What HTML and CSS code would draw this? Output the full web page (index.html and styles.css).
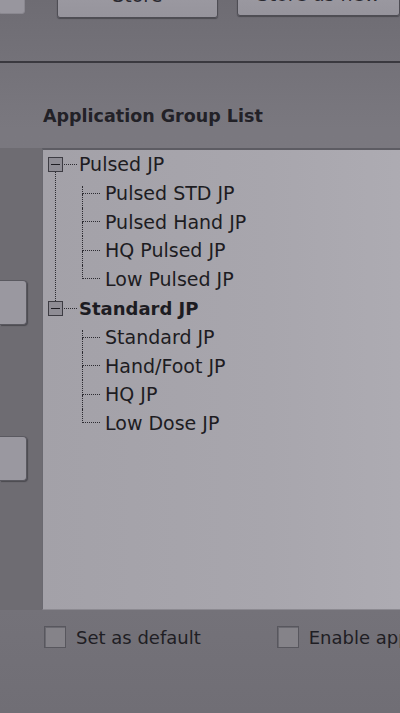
FILE: index.html
```html
<!DOCTYPE html>
<html lang="en">
<head>
    <meta charset="UTF-8">
    <meta name="viewport" content="width=device-width, initial-scale=1.0">
    <title>Application Group List</title>
    <link rel="stylesheet" href="styles.css">
</head>
<body>
    <div class="screen">
        <!-- buttons of the panel above, mostly scrolled away -->
        <div class="toolbar">
            <button class="btn btn-stub"></button>
            <button class="btn btn-store">Store</button>
            <button class="btn btn-store-new">Store as new</button>
        </div>

        <h2 class="section-title">Application Group List</h2>

        <div class="content">
            <div class="side">
                <button class="side-btn side-btn-first"></button>
                <button class="side-btn side-btn-second"></button>
            </div>

            <div class="tree-box">
                <ul class="tree">
                    <li class="group">
                        <div class="group-row">
                            <span class="expander"></span>
                            <span class="connector"></span>
                            <span class="group-name">Pulsed JP</span>
                        </div>
                        <ul class="children">
                            <li class="child"><span class="elbow"><i></i><i></i></span>Pulsed STD JP</li>
                            <li class="child"><span class="elbow"><i></i><i></i></span>Pulsed Hand JP</li>
                            <li class="child"><span class="elbow"><i></i><i></i></span>HQ Pulsed JP</li>
                            <li class="child"><span class="elbow"><i></i><i></i></span>Low Pulsed JP</li>
                        </ul>
                    </li>
                    <li class="group group-last">
                        <div class="group-row">
                            <span class="expander"></span>
                            <span class="connector"></span>
                            <span class="group-name selected">Standard JP</span>
                        </div>
                        <ul class="children">
                            <li class="child"><span class="elbow"><i></i><i></i></span>Standard JP</li>
                            <li class="child"><span class="elbow"><i></i><i></i></span>Hand/Foot JP</li>
                            <li class="child"><span class="elbow"><i></i><i></i></span>HQ JP</li>
                            <li class="child"><span class="elbow"><i></i><i></i></span>Low Dose JP</li>
                        </ul>
                    </li>
                </ul>
            </div>
        </div>

        <div class="options">
            <label class="check"><span class="box"></span>Set as default</label>
            <label class="check check-second"><span class="box"></span>Enable application group</label>
        </div>
    </div>
</body>
</html>
```

FILE: styles.css
```css
body {
    margin: 0;
    padding: 0;
    background-color: #76747b;
    font-family: "DejaVu Sans", Verdana, sans-serif;
    color: #1d1c22;
    overflow: hidden;
}

.screen {
    width: 400px;
    height: 713px;
    overflow: hidden;
    background: linear-gradient(180deg, #6e6c73 0%, #7a787f 18%, #7b7980 60%, #706e75 100%);
}

/* top toolbar, cut by the window edge */
.toolbar {
    height: 61px;
    display: flex;
    align-items: flex-start;
    border-bottom: 2px solid #3a393f;
    overflow: hidden;
}

.btn {
    height: 44px;
    margin-top: -26px;
    background: linear-gradient(180deg, #a09ea6, #96949c);
    border: 1px solid #4e4d54;
    border-radius: 3px;
    font-family: "DejaVu Sans", Verdana, sans-serif;
    font-size: 19px;
    color: #2a2930;
    padding: 0 0 2px 0;
    box-shadow: 0 1px 1px rgba(40, 40, 45, 0.5);
}

.btn-stub {
    width: 28px;
    margin-left: -2px;
    height: 40px;
    border-color: #8a8890;
    background: #98969e;
    box-shadow: none;
}

.btn-store {
    width: 167px;
    margin-left: 32px;
}

.btn-store-new {
    width: 170px;
    margin-left: 19px;
    height: 42px;
    white-space: nowrap;
}

.section-title {
    margin: 43px 0 22px 43px;
    font-size: 17.5px;
    line-height: 20px;
    font-weight: bold;
    color: #222127;
}

.content {
    display: flex;
    height: 462px;
}

.side {
    width: 42px;
    flex-shrink: 0;
    display: flex;
    flex-direction: column;
    background-color: #6e6c72;
}

.side-btn {
    width: 27px;
    height: 45px;
    padding: 0;
    background: #9a98a0;
    border: 1px solid #5a5960;
    border-left: none;
    border-radius: 0 4px 4px 0;
    box-shadow: 1px 1px 1px rgba(40, 40, 45, 0.5);
}

.side-btn-first {
    margin-top: 132px;
}

.side-btn-second {
    margin-top: 111px;
}

.tree-box {
    flex: 1;
    margin-right: -20px;
    background: linear-gradient(90deg, #a3a1a8 0%, #a8a6ad 60%, #aeacb3 100%);
    border-top: 2px solid #5d5c63;
    border-left: 1px solid #6a6970;
    border-bottom: 1px solid #8c8a91;
}

ul {
    list-style-type: none;
    margin: 0;
    padding: 0;
}

.tree {
    padding: 7px 0 0 12px;
    font-size: 19px;
}

/* vertical line from one group to the next */
.group {
    border-left: 1px dotted #2c2b31;
    padding-bottom: 8px;
}

.group-last {
    border-left-color: transparent;
}

.group-row {
    height: 15px;
    display: flex;
    align-items: center;
    margin-left: -8px;
    white-space: nowrap;
}

.expander {
    width: 13px;
    height: 13px;
    border: 1px solid #3d3c43;
    background: #8f8d95;
    position: relative;
    flex-shrink: 0;
}

.expander::after {
    content: "";
    position: absolute;
    left: 2px;
    right: 2px;
    top: 6px;
    border-top: 1px solid #1e1d23;
}

.connector {
    width: 13px;
    margin-left: 1px;
    border-top: 1px dotted #2c2b31;
}

.group-name {
    margin-left: 2px;
    line-height: 15px;
}

.selected {
    font-weight: bold;
    font-size: 18px;
}

.children {
    margin: 7px 0 0 26px;
}

.child {
    height: 28.5px;
    display: flex;
    align-items: center;
    white-space: nowrap;
}

.elbow {
    width: 18px;
    align-self: stretch;
    display: flex;
    flex-direction: column;
    margin-right: 5px;
}

.elbow i {
    flex: 1;
    border-left: 1px dotted #2c2b31;
}

.elbow i:first-child {
    border-bottom: 1px dotted #2c2b31;
}

.child:first-child .elbow i:first-child {
    border-left: none;
    position: relative;
}

.child:first-child .elbow i:first-child::before {
    content: "";
    position: absolute;
    left: 0;
    bottom: -1px;
    height: 8px;
    border-left: 1px dotted #2c2b31;
}

.child:last-child .elbow i:last-child {
    border-left: none;
}

.options {
    display: flex;
    align-items: center;
    padding: 16px 0 0 44px;
    font-size: 18px;
    white-space: nowrap;
}

.check {
    display: flex;
    align-items: center;
    color: #1f1e24;
}

.box {
    width: 20px;
    height: 20px;
    border: 1px solid #58575e;
    background: #858389;
    margin-right: 10px;
    box-shadow: inset 1px 1px 0 #6a6970;
}

.check-second {
    margin-left: 76px;
}
```
